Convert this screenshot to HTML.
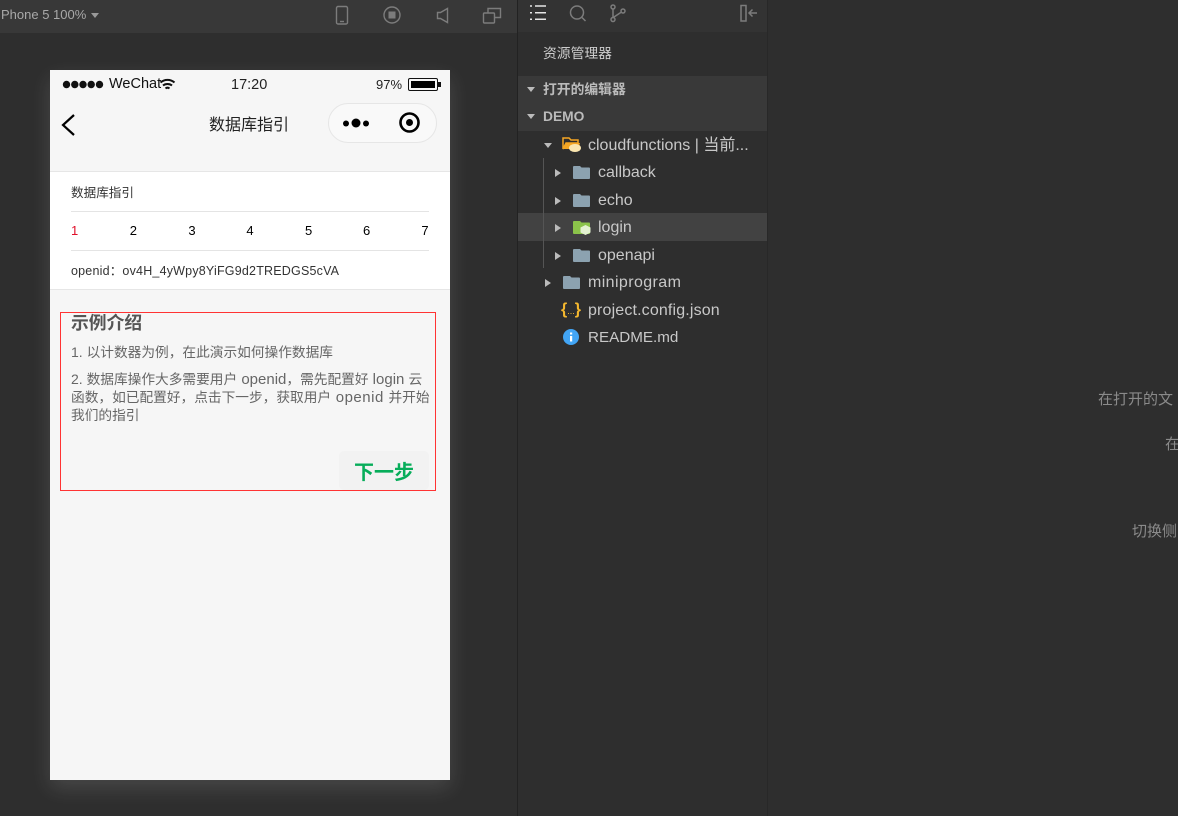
<!DOCTYPE html>
<html><head><meta charset="utf-8">
<style>
*{box-sizing:border-box}
html,body{margin:0;padding:0;width:1178px;height:816px;overflow:hidden;background:#2e2e2e;font-family:"Liberation Sans","Noto Sans CJK SC",sans-serif}
.a{position:absolute;white-space:nowrap}
.t{color:#c8c8c8;font-size:16px;line-height:20px}
.line{position:absolute;left:21px;width:358px;height:1px;background:#e4e4e4}
.n{position:absolute;top:222px;font-size:13px;line-height:18px;color:#000}
.p{font-size:13.7px;line-height:18px;color:#666}
.p span{font-size:15px}
.p b{font-size:14px;font-weight:normal}
.d{position:absolute;border:4px solid transparent;border-top:5px solid #bbb;border-bottom:0}
.r{position:absolute;border:4px solid transparent;border-left:6px solid #bbb;border-right:0}
</style></head><body>
<div class="a" style="left:0;top:0;width:518px;height:33px;background:#383838"></div>
<div class="a" style="left:1px;top:6px;font-size:13px;line-height:17px;color:#a8a8a8">Phone 5 100%</div>
<div class="a" style="left:91px;top:13px;border:4px solid transparent;border-top:5px solid #999;border-bottom:0"></div>
<svg class="a" style="left:330px;top:3px" width="180" height="24" fill="none" stroke="#7c7c7c" stroke-width="1.4">
<rect x="6.500" y="3.500" width="11" height="17.500" rx="1.500"/><path d="M10 18.500h4"/>
<circle cx="62" cy="12" r="8"/><rect x="58.500" y="8.500" width="7" height="7" fill="#7c7c7c" stroke="none"/>
<path d="M107.500 9.500h3l7-4v14l-7-4h-3z"/>
<rect x="153.500" y="10" width="11" height="10" rx="1"/><path d="M158 10V5.500h12.500v9H165"/>
</svg>
<div class="a" style="left:517px;top:0;width:1px;height:816px;background:#222"></div>
<div class="a" style="left:518px;top:0;width:249px;height:32px;background:#333"></div>
<div class="a" style="left:767px;top:0;width:1px;height:816px;background:#282828"></div>
<svg class="a" style="left:528px;top:2px" width="240" height="24" fill="none" stroke="#7c7c7c" stroke-width="1.500">
<path d="M7 4h11M7 10.700h11M7 17.300h11M2 4h2M2 10.700h2M2 17.300h2" stroke="#e6e6e6"/>
<circle cx="49" cy="10.500" r="6.500"/><path d="M54 15.500l3.500 3.500"/>
<circle cx="85" cy="5" r="2"/><circle cx="85" cy="17.500" r="2"/><circle cx="95" cy="9" r="2"/><path d="M85 7v8.500M86 15l7.500-5"/>
<rect x="213" y="3.500" width="5" height="15.500"/><path d="M229 11h-8M224.500 7.500L221 11l3.500 3.500"/>
</svg>

<!-- phone -->
<div class="a" style="left:50px;top:70px;width:400px;height:710px;background:#f6f6f6;box-shadow:0 8px 20px rgba(255,255,255,.13)"></div>
<svg class="a" style="left:62px;top:79px" width="44" height="11" fill="#111"><circle cx="4.500" cy="5.500" r="3.700"/><circle cx="12.800" cy="5.500" r="3.700"/><circle cx="21" cy="5.500" r="3.700"/><circle cx="29.200" cy="5.500" r="3.700"/><circle cx="37.500" cy="5.500" r="3.700"/></svg>
<div class="a" style="left:109px;top:76px;font-size:14.500px;line-height:17px;color:#111">WeChat</div>
<svg class="a" style="left:159px;top:78px" width="17" height="14" fill="none" stroke="#111" stroke-width="2"><path d="M1.500 4.500c4-3.500 10-3.500 14 0M4 7.500c2.500-2 6.500-2 9 0M6.500 10.500c1.200-1 2.800-1 4 0"/></svg>
<div class="a" style="left:231px;top:77px;font-size:14.500px;line-height:17px;color:#222">17:20</div>
<div class="a" style="left:376px;top:77px;font-size:13px;line-height:16px;color:#222">97%</div>
<div class="a" style="left:408px;top:78px;width:30px;height:13px;border:1.500px solid #111;border-radius:2px;padding:1.500px"><div style="width:24px;height:7px;background:#000"></div></div>
<div class="a" style="left:438px;top:82px;width:3px;height:5px;background:#111"></div>
<svg class="a" style="left:58px;top:112px" width="22" height="26" fill="none" stroke="#000" stroke-width="2.200"><path d="M16 3L5 13l11 10"/></svg>
<div class="a" style="left:209px;top:115px;font-size:16px;line-height:22px;color:#222">数据库指引</div>
<div class="a" style="left:328px;top:103px;width:109px;height:40px;border:1px solid #e6e6e6;border-radius:20px;background:#f9f9f9"></div>
<svg class="a" style="left:340px;top:110px" width="90" height="26"><circle cx="6" cy="13.500" r="3" fill="#000"/><circle cx="16" cy="13" r="4.500" fill="#000"/><circle cx="26" cy="13.500" r="3" fill="#000"/><circle cx="69.500" cy="12.500" r="9" fill="none" stroke="#000" stroke-width="2.600"/><circle cx="69.500" cy="12.500" r="3.500" fill="#000"/></svg>

<div class="a" style="left:50px;top:171px;width:400px;height:119px;background:#fff;border-top:1px solid #e6e6e6;border-bottom:1px solid #e6e6e6"></div>
<div style="position:absolute;left:50px;top:0;width:400px;height:0">
<div class="line" style="top:211px"></div><div class="line" style="top:250px"></div>
</div>
<div class="a" style="left:71px;top:184px;font-size:12.600px;line-height:18px;color:#333">数据库指引</div>
<div class="n" style="left:71px;color:#e0102a">1</div><div class="n" style="left:129.700px">2</div><div class="n" style="left:188.400px">3</div><div class="n" style="left:246.400px">4</div><div class="n" style="left:305px">5</div><div class="n" style="left:363px">6</div><div class="n" style="left:421.400px">7</div>
<div class="a" style="left:71px;top:262px;font-size:12.500px;line-height:18px;color:#333;letter-spacing:.2px">openid：ov4H_4yWpy8YiFG9d2TREDGS5cVA</div>

<div class="a" style="left:60px;top:312px;width:376px;height:179px;border:1px solid #f33"></div>
<div class="a" style="left:71px;top:311px;font-size:17.800px;line-height:24px;font-weight:bold;color:#555">示例介绍</div>
<div class="a p" style="left:71px;top:343px"><b>1. </b>以计数器为例，在此演示如何操作数据库</div>
<div class="a p" style="left:71px;top:370px"><b>2. </b>数据库操作大多需要用户<span> openid</span>，需先配置好<span> login </span>云</div>
<div class="a p" style="left:71px;top:389px">函数，如已配置好，点击下一步，获取用户<span style="letter-spacing:.5px"> openid </span>并开始</div>
<div class="a p" style="left:71px;top:407px">我们的指引</div>
<div class="a" style="left:339px;top:451px;width:90px;height:39px;background:#f2f2f2;border-radius:5px;text-align:center;font-size:20px;line-height:44px;font-weight:bold;color:#07ad5a">下一步</div>

<!-- sidebar -->
<div class="a" style="left:543px;top:45px;font-size:13.800px;line-height:18px;color:#ccc">资源管理器</div>
<div class="a" style="left:518px;top:76px;width:249px;height:55px;background:#393939"></div>
<div class="d" style="left:527px;top:87px"></div>
<div class="a" style="left:543px;top:81px;font-size:13.800px;line-height:18px;font-weight:bold;color:#bbb">打开的编辑器</div>
<div class="d" style="left:527px;top:114px"></div>
<div class="a" style="left:543px;top:108px;font-size:13.800px;line-height:18px;font-weight:bold;color:#bbb">DEMO</div>
<div class="a" style="left:518px;top:213px;width:249px;height:28px;background:#424242"></div>
<div class="a" style="left:543px;top:158px;width:1px;height:110px;background:#555"></div>

<div class="d" style="left:544px;top:143px"></div>
<svg class="a" style="left:562px;top:136px" width="20" height="18"><path d="M1 2h6l2 2h7v3H4L1 13z" fill="none" stroke="#f5a623" stroke-width="1.500"/><path d="M4 7h14l-2 6H1z" fill="#f5a623"/><ellipse cx="13" cy="12" rx="6" ry="4" fill="#fbe6b0"/></svg>
<div class="a t" style="left:588px;top:136px">cloudfunctions | 当前...</div>

<svg class="a" style="left:572px;top:164px" width="18" height="16"><path d="M1 3q0-1 1-1h6l1.500 1.500H17q1 0 1 1V14q0 1-1 1H2q-1 0-1-1z" fill="#8ca2b0"/></svg>
<div class="r" style="left:555px;top:169px"></div>
<div class="a t" style="left:598px;top:163px">callback</div>

<svg class="a" style="left:572px;top:192px" width="18" height="16"><path d="M1 3q0-1 1-1h6l1.500 1.500H17q1 0 1 1V14q0 1-1 1H2q-1 0-1-1z" fill="#8ca2b0"/></svg>
<div class="r" style="left:555px;top:197px"></div>
<div class="a t" style="left:598px;top:191px">echo</div>

<svg class="a" style="left:572px;top:219px" width="20" height="18"><path d="M1 3q0-1 1-1h6l1.500 1.500H17q1 0 1 1V14q0 1-1 1H2q-1 0-1-1z" fill="#8bc34a"/><path d="M13.500 6l5 2.500v5l-5 2.500-5-2.500v-5z" fill="#e3f2d0"/></svg>
<div class="r" style="left:555px;top:224px"></div>
<div class="a t" style="left:598px;top:218px">login</div>

<svg class="a" style="left:572px;top:247px" width="18" height="16"><path d="M1 3q0-1 1-1h6l1.500 1.500H17q1 0 1 1V14q0 1-1 1H2q-1 0-1-1z" fill="#8ca2b0"/></svg>
<div class="r" style="left:555px;top:252px"></div>
<div class="a t" style="left:598px;top:246px">openapi</div>

<svg class="a" style="left:562px;top:274px" width="18" height="16"><path d="M1 3q0-1 1-1h6l1.500 1.500H17q1 0 1 1V14q0 1-1 1H2q-1 0-1-1z" fill="#8ca2b0"/></svg>
<div class="r" style="left:545px;top:279px"></div>
<div class="a t" style="left:588px;top:273px;letter-spacing:.4px">miniprogram</div>

<div class="a" style="left:561px;top:300px;font-size:16px;line-height:20px;color:#f5b82e;font-weight:bold">{<span style="font-size:9px;font-weight:normal">...</span>}</div>
<div class="a t" style="left:588px;top:301px;letter-spacing:.15px">project.config.json</div>

<svg class="a" style="left:563px;top:329px" width="17" height="17"><circle cx="8" cy="8" r="8" fill="#42a5f5"/><rect x="7" y="7" width="2.200" height="5.500" fill="#fff"/><rect x="7" y="3.500" width="2.200" height="2" fill="#fff"/></svg>
<div class="a t" style="left:588px;top:328px;font-size:15.200px">README.md</div>

<div class="a" style="left:1098px;top:390px;font-size:15px;line-height:20px;color:#8a8a8a">在打开的文</div>
<div class="a" style="left:1165px;top:435px;font-size:15px;line-height:20px;color:#8a8a8a">在</div>
<div class="a" style="left:1132px;top:522px;font-size:15px;line-height:20px;color:#8a8a8a">切换侧</div>
</body></html>
